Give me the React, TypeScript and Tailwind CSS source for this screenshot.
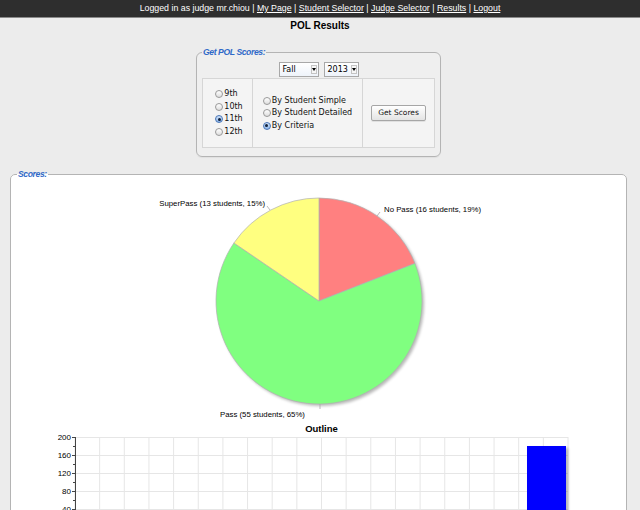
import React from "react";

function Radio({ checked }: { checked?: boolean }) {
  return (
    <span
      className={
        checked
          ? "relative inline-block w-[8px] h-[8px] rounded-full border border-[#4a76b8] bg-linear-to-b from-[#cfe2f8] to-[#8fb6e8] mr-[1px] shrink-0"
          : "relative inline-block w-[8px] h-[8px] rounded-full border border-[#9a9a9a] bg-linear-to-b from-white to-[#dedede] mr-[1px] shrink-0"
      }
    >
      {checked && (
        <span className="absolute left-[1.5px] top-[1.5px] w-[3px] h-[3px] rounded-full bg-[#10203a]" />
      )}
    </span>
  );
}

function Select({ label, width }: { label: string; width: string }) {
  return (
    <div
      className={`${width} h-[15px] border border-[#a8a8a8] bg-linear-to-b from-white to-[#eef3fa] flex items-center justify-between pl-[3px] pr-[1px]`}
    >
      <span className="text-[8px] leading-[10px] text-black font-['DejaVu_Sans',sans-serif]">{label}</span>
      <span className="w-[6px] h-[9px] border border-[#c4c4c4] bg-[#f6f6f6] flex items-center justify-center">
        <span className="w-0 h-0 border-l-[2px] border-r-[2px] border-t-[3px] border-l-transparent border-r-transparent border-t-black" />
      </span>
    </div>
  );
}

function RadioRow({ label, checked }: { label: string; checked?: boolean }) {
  return (
    <div className="flex items-center h-[12.5px]">
      <Radio checked={checked} />
      <span className="text-[8px] leading-[10px] text-[#111]">{label}</span>
    </div>
  );
}

export default function App() {
  const vlines: number[] = [];
  for (let i = 0; i <= 20; i++) vlines.push(75 + i * 24.65);
  const hlines = [437, 455, 473, 491, 509, 527];
  const ylabels = [
    { v: "200", y: 437 },
    { v: "160", y: 455 },
    { v: "120", y: 473 },
    { v: "80", y: 491 },
    { v: "40", y: 509 },
  ];
  const minor = [446, 464, 482, 500, 518];

  return (
    <div className="min-h-[510px] bg-[#ececec] font-['Liberation_Sans',Arial,sans-serif]">
      <div className="h-[18px] bg-[#2e2e2e] border-b border-[#8a8a8a] flex items-center justify-center text-[8.8px] text-white whitespace-pre">
        <span>Logged in as judge mr.chiou | </span>
        <span className="underline">My Page</span>
        <span> | </span>
        <span className="underline">Student Selector</span>
        <span> | </span>
        <span className="underline">Judge Selector</span>
        <span> | </span>
        <span className="underline">Results</span>
        <span> | </span>
        <span className="underline">Logout</span>
      </div>

      <h1 className="mt-[1px] text-center text-[10px] leading-[13px] font-bold text-black">
        POL Results
      </h1>

      <fieldset className="mt-[15px] ml-[196px] w-[245px] border border-[#b4b4b4] rounded-[6px] px-[5px] pb-[8px] bg-[#efefef] shadow-[0_1px_1px_rgba(0,0,0,0.05)]">
        <legend className="px-[1px] text-[8.6px] leading-[10px] tracking-[-0.4px] font-bold italic text-[#2f69c8]">
          Get POL Scores:
        </legend>
        <div className="flex justify-center gap-[5px] mt-[5px]">
          <Select label="Fall" width="w-[40px]" />
          <Select label="2013" width="w-[35px]" />
        </div>
        <div className="mt-[1px] flex h-[70px] border border-[#d6d6d6] bg-[#f4f4f4] font-['DejaVu_Sans',sans-serif]">
          <div className="w-[50px] border-r border-[#d6d6d6] flex items-center justify-center pl-[3px]">
            <div>
              <RadioRow label="9th" />
              <RadioRow label="10th" />
              <RadioRow label="11th" checked />
              <RadioRow label="12th" />
            </div>
          </div>
          <div className="w-[110px] border-r border-[#d6d6d6] flex items-center justify-center">
            <div>
              <RadioRow label="By Student Simple" />
              <RadioRow label="By Student Detailed" />
              <RadioRow label="By Criteria" checked />
            </div>
          </div>
          <div className="flex-1 flex items-center justify-center">
            <div className="w-[55px] h-[16px] border border-[#a6a6a6] rounded-[2px] bg-linear-to-b from-white to-[#e4e4e4] flex items-center justify-center text-[7.5px] text-[#111] shadow-[0_1px_0_rgba(0,0,0,0.08)]">
              Get Scores
            </div>
          </div>
        </div>
      </fieldset>

      <fieldset className="mt-[12px] ml-[10px] mr-[13px] border border-[#b4b4b4] rounded-[5px] bg-white p-0">
        <legend className="ml-[6px] px-[1px] text-[8.6px] leading-[10px] tracking-[-0.4px] font-bold italic text-[#2f69c8]">
          Scores:
        </legend>
        <svg width="615" height="340" viewBox="11 179 615 340" className="block">
          <defs>
            <filter id="sh" x="-20%" y="-20%" width="140%" height="140%">
              <feGaussianBlur stdDeviation="1.5" />
            </filter>
          </defs>
          <circle cx="321" cy="303" r="103" fill="#000" opacity="0.28" filter="url(#sh)" />
          <path d="M319,301 L319,198 A103,103 0 0 1 414.9,263.4 Z" fill="#ff8080" stroke="#b0b0b0" strokeWidth="0.7" />
          <path d="M319,301 L414.9,263.4 A103,103 0 1 1 233.9,243.0 Z" fill="#80ff80" stroke="#b0b0b0" strokeWidth="0.7" />
          <path d="M319,301 L233.9,243.0 A103,103 0 0 1 319,198 Z" fill="#ffff80" stroke="#b0b0b0" strokeWidth="0.7" />
          <line x1="267" y1="206" x2="270" y2="210" stroke="#aaa" strokeWidth="0.8" />
          <line x1="380" y1="212" x2="377" y2="216" stroke="#aaa" strokeWidth="0.8" />
          <line x1="320" y1="404" x2="320" y2="409" stroke="#aaa" strokeWidth="0.8" />
          <g fontFamily="Liberation Sans, Arial, sans-serif" fontSize="7.8" fill="#000">
            <text x="265" y="206" textAnchor="end">SuperPass (13 students, 15%)</text>
            <text x="384" y="212">No Pass (16 students, 19%)</text>
            <text x="220" y="417">Pass (55 students, 65%)</text>
          </g>

          <text x="321.5" y="432" textAnchor="middle" fontFamily="Liberation Sans, Arial, sans-serif" fontSize="9.5" fontWeight="bold" fill="#000">
            Outline
          </text>
          {hlines.map((y) => (
            <line key={"h" + y} x1="75" y1={y + 0.5} x2="568" y2={y + 0.5} stroke="#e6e6e6" strokeWidth="1" />
          ))}
          {vlines.map((x, i) => (
            <line key={"v" + i} x1={x} y1="437" x2={x} y2="530" stroke="#e6e6e6" strokeWidth="1" />
          ))}
          <rect x="529" y="448" width="39" height="80" fill="#000" opacity="0.3" filter="url(#sh)" />
          <rect x="527" y="446" width="39" height="80" fill="#0000ff" />
          <line x1="75.5" y1="437" x2="75.5" y2="530" stroke="#444" strokeWidth="1" />
          {ylabels.map((l) => (
            <g key={l.v}>
              <line x1="72" y1={l.y + 0.5} x2="75" y2={l.y + 0.5} stroke="#444" strokeWidth="1" />
              <text x="71" y={l.y + 3} textAnchor="end" fontFamily="Liberation Sans, Arial, sans-serif" fontSize="8" fill="#000">
                {l.v}
              </text>
            </g>
          ))}
          {minor.map((y) => (
            <line key={"m" + y} x1="73" y1={y + 0.5} x2="75" y2={y + 0.5} stroke="#444" strokeWidth="1" />
          ))}
        </svg>
      </fieldset>
    </div>
  );
}
